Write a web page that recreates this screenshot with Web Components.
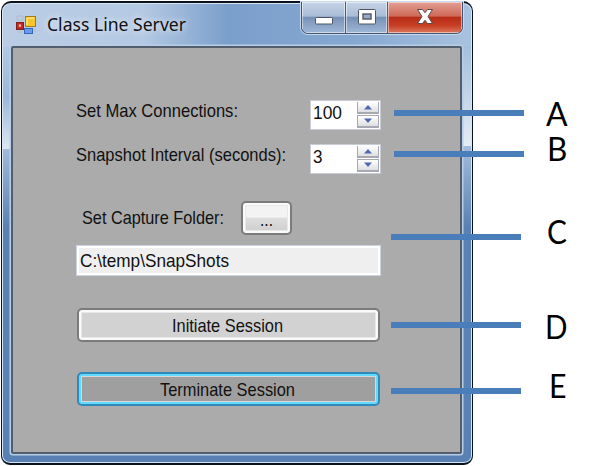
<!DOCTYPE html>
<html lang="en"><head><meta charset="utf-8"><title>Class Line Server</title>
<style>
body{margin:0;width:592px;height:466px;overflow:hidden;background:#fff;position:relative;font-family:"Liberation Sans",Arial,sans-serif;font-size:18.5px;color:#111}
</style></head><body>
<app-window caption="Class Line Server">
  <form-row style="--top:51px;--left:63px;--h:31px"><fit-text w="162" style="--lift:-4px">Set Max Connections:</fit-text><number-spinner slot="end" style="--x:72px" value="100" w="29"></number-spinner></form-row>
  <form-row style="--top:13px;--left:63px;--h:31px"><fit-text w="210" style="--lift:-4px">Snapshot Interval (seconds):</fit-text><number-spinner slot="end" style="--x:24px" value="3" w="9.5"></number-spinner></form-row>
  <form-row style="--top:27px;--left:69px;--h:34px"><fit-text w="142">Set Capture Folder:</fit-text><push-button slot="end" style="--x:17px;--w:51px;--h:34px"><fit-text w="13" style="--lift:2px">...</fit-text></push-button></form-row>
  <form-row style="--top:10px;--left:63px;--h:31px"><path-field><fit-text w="149">C:\temp\SnapShots</fit-text></path-field></form-row>
  <form-row style="--top:32px;--left:64px;--h:34px"><push-button style="--w:303px;--h:34px;--face:#d2d2d2"><fit-text w="111" style="--x:-2px;--lift:.5px">Initiate Session</fit-text></push-button></form-row>
  <form-row style="--top:30px;--left:64px;--h:34px"><push-button style="--w:303px;--h:34px;--face:#9f9f9f;--edge:#3189b8;--glow:#62daff;--line:#dcd6d6"><fit-text w="135" style="--x:-2px;--lift:.5px">Terminate Session</fit-text></push-button></form-row>
</app-window>
<call-out style="left:394px;top:93px;--gap:22px;--ly:0px" w="21.6">A</call-out>
<call-out style="left:394px;top:134px;--gap:23px;--ly:-6px" w="20.3">B</call-out>
<call-out style="left:391px;top:217px;--gap:26px;--ly:-6px" w="19.9">C</call-out>
<call-out style="left:391px;top:305px;--gap:24px;--ly:1px" w="22.5">D</call-out>
<call-out style="left:391px;top:371px;--gap:28px;--ly:-6px" w="17.5">E</call-out>
<script>
const define=(name,html,init)=>customElements.define(name,class extends HTMLElement{
  connectedCallback(){
    if(this.shadowRoot)return;
    const r=this.attachShadow({mode:'open'});
    r.innerHTML=html;
    if(init)init(this,r);
  }
});
// Text condensed or widened to a fixed advance width.
define('fit-text',`<style>
:host{display:block;flex:none;white-space:nowrap;line-height:20px;position:relative;top:var(--lift,0);margin-left:var(--x,0)}
span{display:inline-block;transform-origin:0 50%}
</style><span><slot></slot></span>`,(el,r)=>{
  const s=r.querySelector('span'),w=+el.getAttribute('w');
  const n=s.getBoundingClientRect().width;
  el.style.width=w+'px';
  s.style.transform='scaleX('+w/n+')';
});
define('form-row',`<style>
:host{display:flex;align-items:center;height:var(--h);margin-top:var(--top);padding-left:var(--left)}
</style><slot></slot><slot name="end"></slot>`);
define('number-spinner',`<style>
:host{display:flex;box-sizing:border-box;width:71px;height:30px;margin-left:var(--x);background:#fff;border:1px solid #c9ccd4;padding:1px 1px 1px 2px;align-items:stretch}
.v{flex:1;padding-top:2px}
.b{width:22px;display:grid;grid-template-rows:1fr 1fr;gap:1px}
i{border:1px solid #a6a9b1;border-width:0 1px 2px;background:linear-gradient(#fff,#dedfe3);display:flex;align-items:center;justify-content:center}
i+i{border-top-width:1px}
svg{display:block}
fit-text{--x:0;--lift:-.5px}
</style><div class="v"></div><div class="b"><i><svg width="10" height="6"><path d="M1 5.5L5 1l4 4.5z" fill="#5068b4"/></svg></i><i><svg width="10" height="6"><path d="M1 .5L5 5 9 .5z" fill="#5068b4"/></svg></i></div>`,(el,r)=>{
  const t=document.createElement('fit-text');
  t.setAttribute('w',el.getAttribute('w'));t.textContent=el.getAttribute('value');
  r.querySelector('.v').append(t);
});
define('push-button',`<style>
:host{display:flex;box-sizing:border-box;align-items:center;justify-content:center;width:var(--w);height:var(--h);margin-left:var(--x,0);border:2px solid var(--edge,#7b7b7b);border-radius:5px;background:var(--face,linear-gradient(#f3f3f3 0 48%,#dedede 49%,#cdcdcd));box-shadow:inset 0 0 0 2px var(--glow,#fafafa),inset 0 0 0 3px var(--line,#e8e8e8)}
div{--x:0px;display:contents}
</style><div><slot></slot></div>`);
define('path-field',`<style>
:host{display:flex;align-items:center;box-sizing:border-box;width:305px;height:31px;border:1px solid #ccd3df;background:#efefef;box-shadow:inset 0 0 0 2px #fff;padding-left:3px}
</style><slot></slot>`);
define('call-out',`<style>
:host{position:absolute;display:flex;align-items:center;height:40px;color:#000;font:33px Lato,"Open Sans",sans-serif}
.l{width:130px;height:6px;background:#4a7ebb}
.t{margin-left:var(--gap);position:relative;top:var(--ly,0)}
</style><div class="l"></div><div class="t"></div>`,(el,r)=>{
  const t=document.createElement('fit-text');
  t.setAttribute('w',el.getAttribute('w'));t.textContent=el.textContent;
  r.querySelector('.t').append(t);
});
define('window-controls',`<style>
:host{display:flex;box-sizing:border-box;width:162px;height:32px;border:1px solid #465570;border-top:0;border-radius:0 0 7px 7px;overflow:hidden;box-shadow:0 0 0 1px #c5d9ef}
div{display:flex;align-items:center;justify-content:center;box-shadow:inset 0 0 0 1px #ffffff80;background:linear-gradient(#c5d3e5,#a9bdd6 45%,#7791b6 50%,#a0b8d7);border-right:1px solid #4f5e78;padding-bottom:2px;box-sizing:border-box}
.m{width:44px}.x{flex:1;border:0;background:linear-gradient(#e2a096,#cf6a58 45%,#b82d18 50%,#c63d23 75%,#dc7a60)}
.r{width:42px}
</style>
<div class="m"><svg width="20" height="20"><rect x="1.5" y="10.5" width="17" height="6.5" rx="1" fill="#fff" stroke="#505565"/></svg></div>
<div class="r"><svg width="20" height="20"><rect x="1.5" y="2.5" width="17" height="14.5" rx="1" fill="#fff" stroke="#505565"/><rect x="6" y="7" width="8" height="5" fill="#98aac5" stroke="#505565" stroke-width="1.4"/></svg></div>
<div class="x"><svg width="20" height="20"><path d="M2.5 2.5h5L10 5.7l2.5-3.2h5l-4.5 7 4.5 7h-5L10 13.3l-2.5 3.2h-5l4.5-7z" fill="#fff" stroke="#59494f" stroke-linejoin="round"/></svg></div>`);
define('app-window',`<style>
:host{display:flex;flex-direction:column;box-sizing:border-box;width:472px;height:464px;margin:1px;border:2px solid #07121e;border-width:2px 1px 2px 1px;border-radius:10px 10px 9px 9px;padding:0 9px 9px;background:linear-gradient(90deg,#bacde5 0,#b4c9e3 30%,#7b9fcb 48%,#85a8d1 75%,#a9c2df) 0 0/100% 44px no-repeat,
 linear-gradient(#a4bfdd,#bdd0e6 40%,#e4edf5 100%) 100% 44px/12px 99px no-repeat,
 linear-gradient(#b0c8e3,#9bb8d9 50%,#dce8f3 100%) 0 44px/12px 102px no-repeat,
 linear-gradient(#a5bddb,#5a81b2 25%,#5b82b4 80%,#5880b3) 0 142px/100% 330px no-repeat;box-shadow:inset 0 0 0 1px #dae7f3}
header{display:flex;height:43px;flex:none}
.i{margin:10px 0 0 5px;width:22px;height:24px}
.t{margin:11px 0 0 9px;font-size:18px;font-family:"Noto Sans","Open Sans",sans-serif;text-shadow:0 0 8px #fff}
window-controls{margin:-1px 0 0 auto;flex:none}
main{flex:1;background:#ababab;border:2px solid #535d6c;border-radius:2px;box-shadow:0 0 0 1.5px #b5cde7;margin:0 1px 0 0}
</style>
<header><svg class="i" viewBox="0 0 22 24"><rect x=".5" y="9.5" width="7" height="7" fill="#bd2822" stroke="#84201c"/><rect x="2.8" y="11.5" width="2.3" height="2.3" fill="#ffb5a5"/><rect x="9.5" y="3.5" width="10" height="10" fill="#f8c62c" stroke="#a9781a"/><path d="M11 12V5h7" stroke="#fff0a0" fill="none"/><rect x="8.5" y="15.5" width="8" height="5" fill="#689cf0" stroke="#3567b5"/><path d="M1 3h6v4M1 3v4h6M1 19h5M19 16v4" stroke="#b5b9c4" fill="none"/></svg><div class="t"></div><window-controls></window-controls></header><main><slot></slot></main>`,(el,r)=>{
  const t=document.createElement('fit-text');
  t.setAttribute('w','139');t.textContent=el.getAttribute('caption');
  r.querySelector('.t').append(t);
});
</script></body></html>
